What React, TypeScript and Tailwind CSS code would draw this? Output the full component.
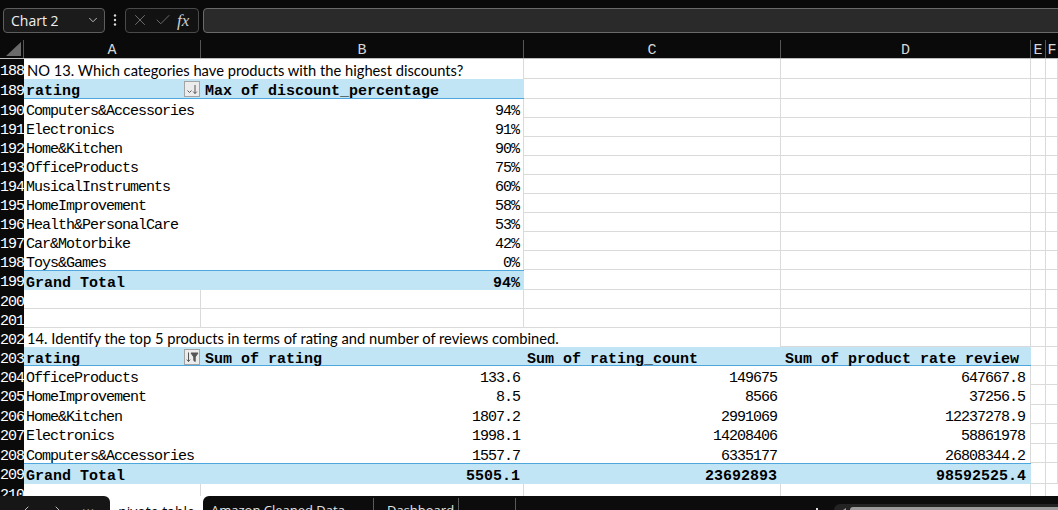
import type { ReactNode } from "react";
import { Check, ChevronDown, ChevronLeft, ChevronRight, X } from "lucide-react";

const grid = "border-r border-b border-[#dadada]";
const mono = "font-['Liberation_Mono',monospace] text-[15px] leading-[13px] tracking-[-1px] text-black";
const monoBold = "font-['Liberation_Mono',monospace] text-[15px] leading-[13px] font-bold tracking-[0px] text-black";
// Excel sits the text low in the cell
const cellText = "flex items-start pt-[6px] whitespace-nowrap";

function Blank({ w, cls = grid }: { w: string; cls?: string }) {
  return <div className={`${w} shrink-0 h-full ${cls}`} />;
}

function Row({ n, h, children }: { n: number; h: string; children?: ReactNode }) {
  return (
    <div className={`flex ${h} shrink-0`}>
      <div className="w-[24px] shrink-0 bg-[#0a0a0a] flex justify-end items-start pt-[6px] font-['Liberation_Mono',monospace] text-[15px] leading-[13px] tracking-[-1px] text-white">
        {n}
      </div>
      {children}
    </div>
  );
}

// C..F blank gridline cells
function TailCD() {
  return (
    <>
      <Blank w="w-[257px]" />
      <Blank w="w-[250px]" />
      <Blank w="w-[15px]" />
      <Blank w="w-[12px]" />
    </>
  );
}

function TailEF() {
  return (
    <>
      <Blank w="w-[15px]" />
      <Blank w="w-[12px]" />
    </>
  );
}

function SortButton() {
  return (
    <div className="w-[16px] h-[16px] shrink-0 mr-[1px] -mt-[4px] border border-[#a3a3a3] bg-[#ececec] flex items-center justify-center">
      <svg width="14" height="14" viewBox="0 0 14 14" fill="none" stroke="#555" strokeWidth="1">
        <path d="M2.5 8.5 L4.5 10.5 L6.5 8.5" />
        <path d="M10 3 V11.5" />
        <path d="M8.2 9.6 L10 11.5 L11.8 9.6" />
      </svg>
    </div>
  );
}

function FilterButton() {
  return (
    <div className="w-[16px] h-[16px] shrink-0 mr-[1px] -mt-[4px] border border-[#a3a3a3] bg-[#ececec] flex items-center justify-center">
      <svg width="14" height="14" viewBox="0 0 14 14" fill="none" stroke="#555" strokeWidth="1">
        <path d="M3.5 2.5 V11.5" />
        <path d="M1.8 9.6 L3.5 11.5 L5.2 9.6" />
        <path d="M6 3 H13 L10.2 7 V11.5 L8.8 10.5 V7 Z" fill="#555" />
      </svg>
    </div>
  );
}

const table1 = [
  ["Computers&Accessories", "94%"],
  ["Electronics", "91%"],
  ["Home&Kitchen", "90%"],
  ["OfficeProducts", "75%"],
  ["MusicalInstruments", "60%"],
  ["HomeImprovement", "58%"],
  ["Health&PersonalCare", "53%"],
  ["Car&Motorbike", "42%"],
  ["Toys&Games", "0%"],
];

const table2 = [
  ["OfficeProducts", "133.6", "149675", "647667.8", "h-[19px]"],
  ["HomeImprovement", "8.5", "8566", "37256.5", "h-[20px]"],
  ["Home&Kitchen", "1807.2", "2991069", "12237278.9", "h-[19px]"],
  ["Electronics", "1998.1", "14208406", "58861978", "h-[20px]"],
  ["Computers&Accessories", "1557.7", "6335177", "26808344.2", "h-[19px]"],
];

const blueFill = "bg-[#c1e5f5]";
const blueLine = "border-[#4ea7dc]";

export default function App() {
  return (
    <div className="w-[1058px] h-[510px] overflow-hidden flex flex-col bg-white">
      {/* formula bar */}
      <div className="h-[40px] shrink-0 bg-[#0a0a0a] flex items-center pl-[3px] overflow-hidden">
        <div className="w-[102px] h-[25px] shrink-0 rounded-[4px] border border-[#5e5e5e] bg-[#1b1b1b] flex items-center justify-between pl-[7px] pr-[4px] font-['Open_Sans',sans-serif] text-[14px] text-[#f0f0f0]">
          <span>Chart 2</span>
          <ChevronDown size={14} strokeWidth={1.5} color="#d0d0d0" />
        </div>
        <div className="w-[20px] shrink-0 flex justify-center">
          <svg width="4" height="14" viewBox="0 0 4 14">
            <circle cx="2" cy="2.5" r="1.2" fill="#d8d8d8" />
            <circle cx="2" cy="7" r="1.2" fill="#d8d8d8" />
            <circle cx="2" cy="11.5" r="1.2" fill="#d8d8d8" />
          </svg>
        </div>
        <div className="w-[74px] h-[25px] shrink-0 rounded-[4px] border border-[#4a4a4a] bg-[#121212] flex items-center pl-[5px] gap-[5px]">
          <X size={18} strokeWidth={1.3} color="#6e6e6e" />
          <Check size={18} strokeWidth={1.3} color="#6e6e6e" />
          <span className="font-['Liberation_Serif',serif] italic text-[17px] text-[#cfcfcf] leading-none">fx</span>
        </div>
        <div className="ml-[4px] w-[870px] h-[25px] shrink-0 rounded-[4px] border border-[#6a6a6a] bg-[#2a2a2a]" />
      </div>

      {/* column headers */}
      <div className="flex h-[19px] shrink-0 bg-[#0a0a0a] border-b border-[#bdbdbd] font-['Liberation_Mono',monospace] text-[15px] leading-[15px] text-[#d6d6d6]">
        <div className="w-[24px] shrink-0 border-r border-[#555] flex items-end justify-end pr-[2px] pb-[2px]">
          <svg width="15" height="14" viewBox="0 0 15 14">
            <polygon points="15,0 15,14 0,14" fill="#6a6a6a" />
          </svg>
        </div>
        <div className="w-[177px] shrink-0 border-r border-[#555] flex items-start pt-[3px] justify-center">A</div>
        <div className="w-[323px] shrink-0 border-r border-[#555] flex items-start pt-[3px] justify-center">B</div>
        <div className="w-[257px] shrink-0 border-r border-[#555] flex items-start pt-[3px] justify-center">C</div>
        <div className="w-[250px] shrink-0 border-r border-[#555] flex items-start pt-[3px] justify-center">D</div>
        <div className="w-[15px] shrink-0 border-r border-[#555] flex items-start pt-[3px] justify-center">E</div>
        <div className="w-[12px] shrink-0 flex items-start pt-[3px] justify-center">F</div>
      </div>

      {/* row 188 */}
      <Row n={188} h="h-[20px]">
        <div className="w-[500px] shrink-0 h-full border-r border-[#dadada] flex items-start pt-[2px] pl-[3px] whitespace-nowrap font-['Lato',sans-serif] text-[14.7px] leading-[18px] text-black">
          NO 13. Which categories have products with the highest discounts?
        </div>
        <TailCD />
      </Row>

      {/* row 189 pivot header */}
      <Row n={189} h="h-[20px]">
        <div className={`w-[177px] shrink-0 h-full ${blueFill} border-b ${blueLine} ${cellText} justify-between pl-[2px] ${monoBold}`}>
          <span>rating</span>
          <SortButton />
        </div>
        <div className={`w-[323px] shrink-0 h-full ${blueFill} border-b ${blueLine} ${cellText} pl-[4px] ${monoBold}`}>
          Max of discount_percentage
        </div>
        <TailCD />
      </Row>

      {table1.map(([name, pct], i) => (
        <Row key={name} n={190 + i} h="h-[19px]">
          <div className={`w-[177px] shrink-0 h-full ${cellText} pl-[2px] ${mono}`}>{name}</div>
          <div className={`w-[323px] shrink-0 h-full border-r border-[#dadada] ${cellText} justify-end pr-[4px] ${mono}`}>{pct}</div>
          <TailCD />
        </Row>
      ))}

      {/* row 199 grand total */}
      <Row n={199} h="h-[20px]">
        <div className={`w-[177px] shrink-0 h-full ${blueFill} border-t ${blueLine} ${cellText} pl-[2px] ${monoBold}`}>
          Grand Total
        </div>
        <div className={`w-[323px] shrink-0 h-full ${blueFill} border-t ${blueLine} ${cellText} justify-end pr-[4px] ${monoBold}`}>
          94%
        </div>
        <TailCD />
      </Row>

      {[200, 201].map((n) => (
        <Row key={n} n={n} h="h-[19px]">
          <Blank w="w-[177px]" />
          <Blank w="w-[323px]" />
          <TailCD />
        </Row>
      ))}

      {/* row 202 */}
      <Row n={202} h="h-[19px]">
        <div className="w-[757px] shrink-0 h-full border-r border-[#dadada] flex items-start pt-[2px] pl-[3px] whitespace-nowrap font-['Lato',sans-serif] text-[14.7px] leading-[17px] text-black">
          14. Identify the top 5 products in terms of rating and number of reviews combined.
        </div>
        <Blank w="w-[250px]" />
        <TailEF />
      </Row>

      {/* row 203 pivot header */}
      <Row n={203} h="h-[19px]">
        <div className={`w-[177px] shrink-0 h-full ${blueFill} border-b ${blueLine} ${cellText} justify-between pl-[2px] ${monoBold}`}>
          <span>rating</span>
          <FilterButton />
        </div>
        <div className={`w-[323px] shrink-0 h-full ${blueFill} border-b ${blueLine} ${cellText} pl-[4px] ${monoBold}`}>
          Sum of rating
        </div>
        <div className={`w-[257px] shrink-0 h-full ${blueFill} border-b ${blueLine} ${cellText} pl-[3px] ${monoBold}`}>
          Sum of rating_count
        </div>
        <div className={`w-[250px] shrink-0 h-full ${blueFill} border-b ${blueLine} ${cellText} pl-[4px] ${monoBold}`}>
          Sum of product rate review
        </div>
        <TailEF />
      </Row>

      {table2.map(([name, r, c, p, h], i) => (
        <Row key={name} n={204 + i} h={h}>
          <div className={`w-[177px] shrink-0 h-full ${cellText} pl-[2px] ${mono}`}>{name}</div>
          <div className={`w-[323px] shrink-0 h-full ${cellText} justify-end pr-[4px] ${mono}`}>{r}</div>
          <div className={`w-[257px] shrink-0 h-full ${cellText} justify-end pr-[4px] ${mono}`}>{c}</div>
          <div className={`w-[250px] shrink-0 h-full border-r border-[#dadada] ${cellText} justify-end pr-[5px] ${mono}`}>{p}</div>
          <TailEF />
        </Row>
      ))}

      {/* row 209 grand total */}
      <Row n={209} h="h-[21px]">
        <div className={`w-[177px] shrink-0 h-full ${blueFill} border-t ${blueLine} ${cellText} pl-[2px] ${monoBold}`}>
          Grand Total
        </div>
        <div className={`w-[323px] shrink-0 h-full ${blueFill} border-t ${blueLine} ${cellText} justify-end pr-[4px] ${monoBold}`}>
          5505.1
        </div>
        <div className={`w-[257px] shrink-0 h-full ${blueFill} border-t ${blueLine} ${cellText} justify-end pr-[4px] ${monoBold}`}>
          23692893
        </div>
        <div className={`w-[250px] shrink-0 h-full ${blueFill} border-t ${blueLine} ${cellText} justify-end pr-[5px] ${monoBold}`}>
          98592525.4
        </div>
        <TailEF />
      </Row>

      {/* row 210, cut off by the sheet tabs */}
      <div className="flex h-[12px] shrink-0 overflow-hidden">
        <div className="w-[24px] shrink-0 bg-[#0a0a0a] flex justify-end items-start pt-[5px] font-['Liberation_Mono',monospace] text-[15px] leading-[13px] tracking-[-1px] text-white">
          210
        </div>
        <div className="w-[177px] shrink-0 border-r border-[#dadada]" />
        <div className="w-[323px] shrink-0 border-r border-[#dadada]" />
        <div className="w-[257px] shrink-0 border-r border-[#dadada]" />
        <div className="w-[250px] shrink-0 border-r border-[#dadada]" />
        <div className="w-[15px] shrink-0 border-r border-[#dadada]" />
        <div className="w-[12px] shrink-0" />
      </div>

      {/* sheet tabs */}
      <div className="flex h-[30px] shrink-0 bg-white font-['Open_Sans',sans-serif] text-[13px]">
        <div className="w-[110px] shrink-0 bg-[#161616] rounded-tr-[6px] flex items-center pl-[18px] gap-[16px] text-[#bdbdbd]">
          <ChevronLeft size={16} strokeWidth={1.5} />
          <ChevronRight size={16} strokeWidth={1.5} />
          <span className="tracking-[1px]">···</span>
        </div>
        <div className="w-[93px] shrink-0 flex items-center justify-center text-black text-[14px]">pivote table</div>
        <div className="flex-1 bg-[#0c0c0c] rounded-tl-[6px] flex items-start text-[#e4e4e4]">
          <div className="w-[170px] shrink-0 h-full flex items-center pl-[8px] whitespace-nowrap">Amazon Cleaned Data</div>
          <div className="w-px h-[26px] mt-[2px] shrink-0 bg-[#5a5a5a]" />
          <div className="w-[84px] shrink-0 h-full flex items-center pl-[13px]">Dashboard</div>
          <div className="w-px h-[26px] mt-[2px] shrink-0 bg-[#5a5a5a]" />
          <div className="w-[56px] shrink-0" />
          <div className="w-px h-[26px] mt-[2px] shrink-0 bg-[#5a5a5a]" />
          <div className="w-[296px] shrink-0" />
          <div className="w-[10px] shrink-0 flex justify-center pt-[12px]">
            <div className="w-[2px] h-[2px] bg-[#dcdcdc]" />
          </div>
          <div className="w-[12px] shrink-0" />
          <div className="w-[224px] shrink-0 h-[20px] mt-[8px] bg-[#232323] rounded-tl-[6px] flex items-start pl-[6px] pt-[3px] gap-[4px]">
            <svg width="6" height="8" viewBox="0 0 6 8" className="mt-[1px]">
              <polygon points="6,0 6,8 0,4" fill="#9b9b9b" />
            </svg>
            <div className="flex-1 h-[10px] bg-[#9b9b9b] rounded-l-[3px]" />
          </div>
        </div>
      </div>
    </div>
  );
}
